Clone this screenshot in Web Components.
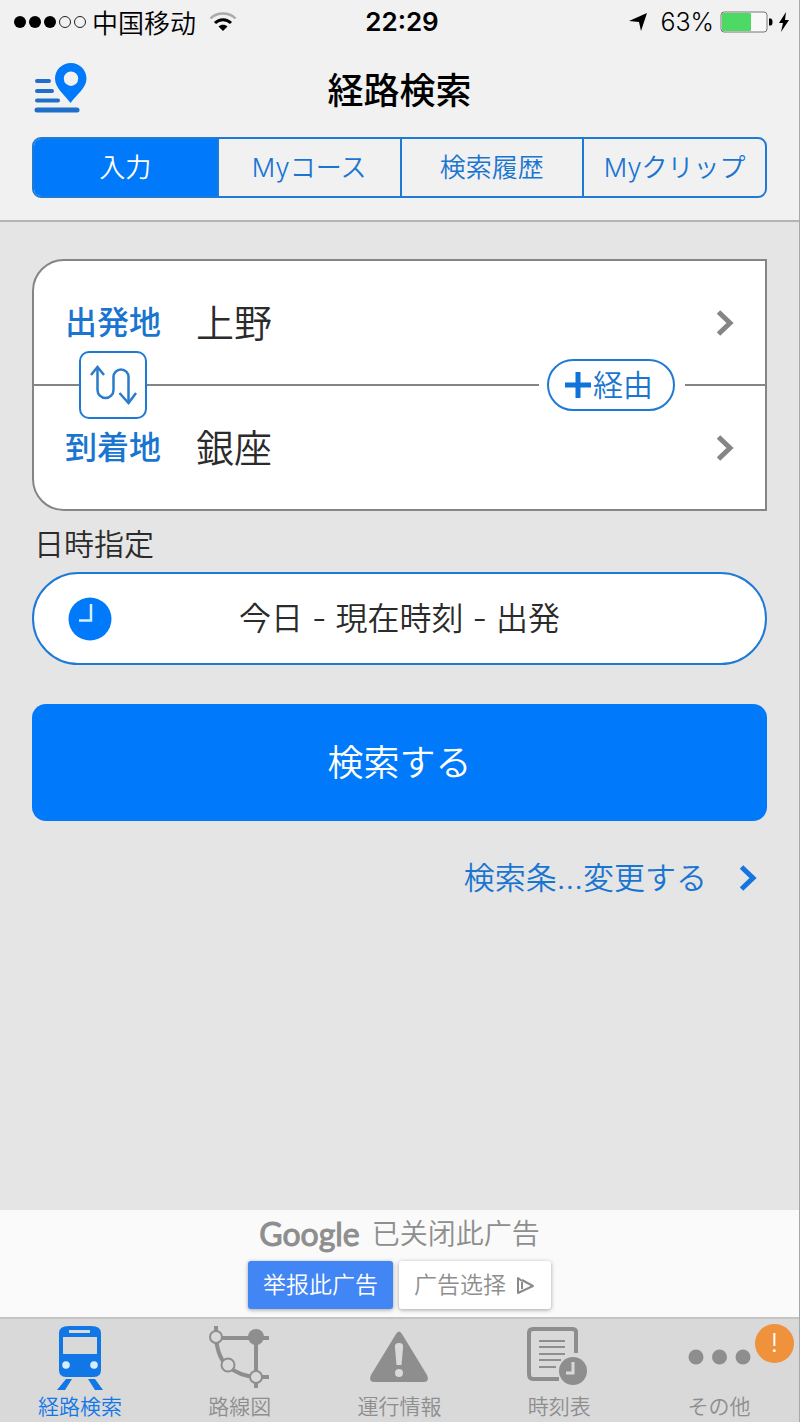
<!DOCTYPE html>
<html lang="ja">
<head>
<meta charset="utf-8">
<meta name="viewport" content="width=device-width, initial-scale=1">
<title>経路検索</title>
<style>
    body {
        --blue: #007afa;
        --line-blue: #1f7ad6;
        --text-blue: #1a75d1;
        --grey: #8e8e8e;
        margin: 0;
        background: #e5e5e5;
        color: #2b2b2b;
        font-family: Inter, "Noto Sans CJK JP", sans-serif;
        font-weight: 350;
    }
</style>
</head>
<body>
<transit-app>
    <status-bar slot="top" carrier="中国移动" time="22:29" battery="63"></status-bar>
    <page-header slot="top" heading="経路検索">
        <segment-item selected>入力</segment-item>
        <segment-item>Myコース</segment-item>
        <segment-item>検索履歴</segment-item>
        <segment-item>Myクリップ</segment-item>
    </page-header>

    <route-card>
        <route-row slot="from" label="出発地">上野</route-row>
        <route-row slot="to" label="到着地">銀座</route-row>
        <span slot="via">経由</span>
    </route-card>
    <date-field label="日時指定">今日 - 現在時刻 - 出発</date-field>
    <search-button>検索する</search-button>
    <option-link href="#options">検索条…変更する</option-link>

    <ad-notice slot="bottom" lang="zh-CN"></ad-notice>
    <tab-bar slot="bottom">
        <tab-item icon="train" href="#route" active>経路検索</tab-item>
        <tab-item icon="map" href="#map">路線図</tab-item>
        <tab-item icon="warning" href="#status">運行情報</tab-item>
        <tab-item icon="timetable" href="#timetable">時刻表</tab-item>
        <tab-item icon="more" href="#more" badge="!">その他</tab-item>
    </tab-bar>
</transit-app>

<script>
/**
 * Shared base: renders the markup and the styles of an element once.
 *
 * @extends HTMLElement
 */
class BaseElement extends HTMLElement {
    constructor() {
        super();
        this.attachShadow({ mode: 'open' });
    }

    connectedCallback() {
        this.shadowRoot.innerHTML = `
            <style>
                * { box-sizing: border-box; }
                button { font: inherit; color: inherit; border: 0; margin: 0; padding: 0; background: none; cursor: pointer; }
                a { color: inherit; text-decoration: none; }
                svg { display: block; flex: none; }
                ${this.styles}
            </style>
            ${this.markup}`;
    }
}

/** Page frame: bars at the top and bottom, the form between them. */
class TransitApp extends BaseElement {
    get markup() {
        return `
            <header><slot name="top"></slot></header>
            <main><slot></slot></main>
            <footer><slot name="bottom"></slot></footer>
        `;
    }

    get styles() {
        return `
            :host {
                display: flex;
                flex-direction: column;
                box-sizing: border-box;
                min-height: 100vh;
                border-right: 1px solid #a8a8a8;
            }
            header { background: #f1f1f1; border-bottom: 2px solid #b4b4b4; }
            main { flex: 1; padding: 37px 32px 32px; }
        `;
    }
}

class StatusBar extends BaseElement {
    get markup() {
        const level = Number(this.getAttribute('battery'));
        return `
            <div class="side">
                <svg width="72" height="14" viewBox="0 0 72 14">
                    <g><circle cx="6" cy="7" r="6"/><circle cx="21" cy="7" r="6"/><circle cx="36" cy="7" r="6"/></g>
                    <g fill="none" stroke="#222"><circle cx="51" cy="7" r="5.5"/><circle cx="66" cy="7" r="5.5"/></g>
                </svg>
                <span class="carrier" lang="zh-CN">${this.getAttribute('carrier')}</span>
                <svg class="wifi" width="28" height="20" viewBox="0 0 28 20" fill="none" stroke-width="3">
                    <path d="M1.5 6.5C8 -.2 20 -.2 26.500 6.500" stroke="#aaa" stroke-width="2.500"/>
                    <path d="M6 11C10.500 6.500 17.500 6.500 22 11" stroke="#000"/>
                    <path d="M9.500 14.500C12 12 16 12 18.500 14.500L14 19Z" fill="#000"/>
                </svg>
            </div>
            <span class="time">${this.getAttribute('time')}</span>
            <div class="side end">
                <svg width="20" height="20" viewBox="0 0 20 20"><path d="M19 1L13 19L11 10L1 9Z"/></svg>
                <span class="percent">${level}%</span>
                <div class="power">
                    <svg width="54" height="22" viewBox="0 0 54 22">
                        <rect x="1" y="1" width="46" height="20" rx="3" fill="#f8f8f8" stroke="#777"/>
                        <rect x="2" y="2" width="${level * 46 / 100}" height="18" rx="1" fill="#4cd964"/>
                        <path d="M49 7.500h1.500q2 0 2 3.500t-2 3.500H49z"/>
                    </svg>
                    <svg width="12" height="20" viewBox="0 0 12 20"><path d="M8 0L1 11H5L3 20L11 8H7Z"/></svg>
                </div>
            </div>
        `;
    }

    get styles() {
        return `
            :host {
                display: grid;
                grid-template-columns: 1fr auto 1fr;
                align-items: center;
                height: 44px;
                padding: 0 9px 0 14px;
                color: #000;
                font-size: 26px;
                line-height: 32px;
            }
            .side { display: flex; align-items: center; gap: 6px; }
            .end { justify-content: flex-end; gap: 12px; }
            .carrier { font-family: "Noto Sans CJK SC", sans-serif; }
            .wifi { margin-left: 7px; }
            .time { font-weight: 600; }
            .percent { font-size: 25px; }
            .power { display: flex; align-items: center; gap: 4px; margin-left: -6px; }
        `;
    }
}

class PageHeader extends BaseElement {
    get markup() {
        return `
            <div class="bar">
                <button type="button" aria-label="地点メモ">
                    <svg width="54" height="56" viewBox="0 0 54 56">
                        <g stroke="#1f6fc8" stroke-linecap="round" stroke-width="4">
                            <path d="M3 18H15M3 28H18M3 37.500H24"/>
                            <path d="M3 47H43" stroke-width="5"/>
                        </g>
                        <path d="M37 0C28 0 21 7 21 15.500C21 25 30 31 36.500 40C43 31 52.500 25 52.500 15.500C52.500 7 45.500 0 37 0ZM37 8.500a7.200 7.200 0 1 1 0 14.400a7.200 7.200 0 1 1 0-14.400Z" fill="#007afa" fill-rule="evenodd"/>
                    </svg>
                </button>
                <h1>${this.getAttribute('heading')}</h1>
            </div>
            <nav><slot></slot></nav>
        `;
    }

    get styles() {
        return `
            :host { display: block; padding: 0 32px 22px; }
            .bar { display: grid; grid-template-columns: 1fr auto 1fr; align-items: center; height: 93px; color: #000; }
            .bar button { justify-self: start; margin-left: 2px; }
            h1 { margin: 0; font-size: 36px; line-height: 48px; font-weight: 500; }
            nav {
                display: grid;
                grid-template-columns: repeat(4, 1fr);
                border: 2px solid var(--line-blue);
                border-radius: 9px;
                overflow: hidden;
            }
        `;
    }
}

class SegmentItem extends BaseElement {
    get markup() {
        return `<button type="button" aria-pressed="${this.hasAttribute('selected')}"><slot></slot></button>`;
    }

    get styles() {
        return `
            :host { display: block; border-left: 2px solid var(--line-blue); color: var(--text-blue); }
            :host(:first-child) { border-left: 0; }
            :host([selected]) { background: var(--blue); color: #fff; }
            button { width: 100%; height: 57px; font-size: 26px; line-height: 32px; white-space: nowrap; }
        `;
    }
}

class ChevronIcon extends BaseElement {
    get markup() {
        return `
            <svg width="18" height="28" viewBox="0 0 18 28" fill="none" stroke="currentColor" stroke-width="5">
                <path d="M2.500 3L14 14L2.500 25"/>
            </svg>
        `;
    }

    get styles() {
        return `:host { display: block; flex: none; }`;
    }
}

/** Start and goal rows, joined by a line that carries the swap and via buttons. */
class RouteCard extends BaseElement {
    get markup() {
        return `
            <slot name="from"></slot>
            <div class="joint">
                <i class="start"></i>
                <button type="button" class="swap" aria-label="入れ替え">
                    <svg width="48" height="42" viewBox="0 0 48 42" fill="none" stroke="#2a7ccb" stroke-width="2.500">
                        <path d="M8.500 4V26a8 8 0 0 0 16 0V13a7.500 7.500 0 0 1 15 0V39"/>
                        <path d="M2 11L8.500 3L15 11M30.500 29L39.500 39L47 29"/>
                    </svg>
                </button>
                <i class="middle"></i>
                <button type="button" class="via">
                    <svg width="26" height="26" viewBox="0 0 26 26" stroke="#0f73da" stroke-width="5"><path d="M13 0V26M0 13H26"/></svg>
                    <slot name="via"></slot>
                </button>
                <i class="end"></i>
            </div>
            <slot name="to"></slot>
        `;
    }

    get styles() {
        return `
            :host {
                display: block;
                background: #fff;
                border: 2px solid #858585;
                border-radius: 32px 0 0 32px;
            }
            .joint { display: flex; align-items: center; height: 2px; }
            i { height: 2px; background: #858585; }
            .start { width: 45px; }
            .middle { flex: 1; margin-right: 8px; }
            .end { width: 80px; margin-left: 10px; }
            button { position: relative; flex: none; background: #fff; border: 2px solid var(--line-blue); color: var(--text-blue); }
            .swap { display: grid; place-items: center; width: 68px; height: 68px; border-radius: 10px; }
            .via {
                display: flex;
                align-items: center;
                justify-content: center;
                gap: 2px;
                width: 128px;
                height: 52px;
                padding-right: 4px;
                border-radius: 26px;
                font-size: 30px;
                line-height: 36px;
            }
        `;
    }
}

class RouteRow extends BaseElement {
    get markup() {
        return `
            <button type="button">
                <span class="label">${this.getAttribute('label')}</span>
                <span class="value"><slot></slot></span>
                <chevron-icon></chevron-icon>
            </button>
        `;
    }

    get styles() {
        return `
            :host { display: block; }
            button { display: flex; align-items: center; width: 100%; height: 123px; padding: 0 31px; text-align: left; }
            .label { width: 131px; color: var(--text-blue); font-size: 32px; line-height: 48px; font-weight: 500; }
            .value { flex: 1; font-size: 38px; line-height: 48px; }
            chevron-icon { color: #858585; }
        `;
    }
}

class DateField extends BaseElement {
    get markup() {
        return `
            <label for="when">${this.getAttribute('label')}</label>
            <button type="button" id="when">
                <svg width="44" height="44" viewBox="0 0 44 44">
                    <circle cx="22" cy="22" r="21.500" fill="#007afa"/>
                    <path d="M23 7V23.500H11" fill="none" stroke="#d8f1ff" stroke-width="2.500"/>
                </svg>
                <span><slot></slot></span>
            </button>
        `;
    }

    get styles() {
        return `
            :host { display: block; margin-top: 15px; }
            label { display: block; margin: 0 2px 10px; font-size: 30px; line-height: 36px; }
            button {
                display: grid;
                grid-template-columns: 44px 1fr 44px;
                align-items: center;
                width: 100%;
                height: 93px;
                padding: 0 34px;
                background: #fff;
                border: 2px solid var(--line-blue);
                border-radius: 47px;
                font-size: 32px;
                line-height: 48px;
            }
        `;
    }
}

class SearchButton extends BaseElement {
    get markup() {
        return `<button type="button"><slot></slot></button>`;
    }

    get styles() {
        return `
            :host { display: block; margin-top: 39px; }
            button {
                width: 100%;
                height: 117px;
                background: var(--blue);
                border-radius: 14px;
                color: #fff;
                font-size: 36px;
                line-height: 48px;
            }
        `;
    }
}

class OptionLink extends BaseElement {
    get markup() {
        return `<a href="${this.getAttribute('href')}"><slot></slot><chevron-icon></chevron-icon></a>`;
    }

    get styles() {
        return `
            :host { display: flex; justify-content: flex-end; margin-top: 33px; padding-right: 10px; }
            a { display: flex; align-items: center; gap: 32px; color: var(--text-blue); font-size: 31px; line-height: 48px; }
            chevron-icon { color: #1474e0; }
        `;
    }
}

class AdNotice extends BaseElement {
    get markup() {
        return `
            <p><b>Google</b><span>已关闭此广告</span></p>
            <div class="actions">
                <button type="button" class="report">举报此广告</button>
                <button type="button" class="choices">
                    广告选择
                    <svg width="20" height="20" viewBox="0 0 20 20" fill="none" stroke="#8a8a8a" stroke-width="2" stroke-linejoin="round">
                        <path d="M6 14V7M6 6L2 3V18L17 11L6 5"/>
                    </svg>
                </button>
            </div>
        `;
    }

    get styles() {
        return `
            :host {
                display: block;
                padding: 3px 0 8px;
                background: #fafafa;
                color: #8e8e8e;
                font-family: Inter, "Noto Sans CJK SC", sans-serif;
            }
            p { display: flex; align-items: center; justify-content: center; gap: 12px; margin: 0 0 6px; font-size: 28px; line-height: 42px; }
            b { font-family: Lato, sans-serif; font-size: 32px; font-weight: 400; -webkit-text-stroke: 1px; }
            .actions { display: flex; justify-content: center; gap: 6px; }
            button {
                display: flex;
                align-items: center;
                justify-content: center;
                gap: 10px;
                height: 48px;
                padding: 0 15px;
                border-radius: 3px;
                box-shadow: 0 1px 4px rgba(0, 0, 0, .35);
                font-size: 23px;
                line-height: 32px;
            }
            .report { background: #4285f4; color: #fff; }
            .choices { background: #fff; }
        `;
    }
}

class TabBar extends BaseElement {
    get markup() {
        return `<nav><slot></slot></nav>`;
    }

    get styles() {
        return `
            :host { display: block; background: #d9d9d9; border-top: 2px solid #c4c4c4; }
            nav { display: grid; grid-template-columns: repeat(5, 1fr); }
        `;
    }
}

const tabIcons = {
    train: `
        <path fill-rule="evenodd" d="M17 0H39Q49 0 49 7V44Q49 51 42 51H14Q7 51 7 44V7Q7 0 17 0ZM17 4V7H38V4ZM11 11V28H45V11Z"/>
        <circle cx="14" cy="39" r="3.800" fill="#d6ecff"/><circle cx="42" cy="39" r="3.800" fill="#d6ecff"/>
        <path d="M14 53H20L13 64H5ZM36 53H43L51 64H43Z"/>
    `,
    map: `
        <g fill="none" stroke="currentColor" stroke-width="4">
            <path d="M4 0V12H57M44 12V62M4 12Q6 33 16 40Q27 50 44 51H57"/>
        </g>
        <circle cx="44" cy="11" r="8"/>
        <g fill="#d9d9d9" stroke="currentColor" stroke-width="2"><circle cx="4" cy="11" r="6"/><circle cx="16" cy="39" r="6.500"/><circle cx="44" cy="51" r="6"/></g>
    `,
    warning: `
        <path d="M25 8Q28 3 31 8L56 49Q59 56 53 56H3Q-3 56 0 49Z"/>
        <path d="M28 17Q33 17 32 22L30.500 39H25.500L24 22Q23 17 28 17Z" fill="#d9d9d9"/><circle cx="28" cy="47" r="4" fill="#d9d9d9"/>
    `,
    timetable: `
        <path d="M45 27V6Q45 3 41 3H2Q-2 3 -2 7V48Q-2 53 2 53H28" fill="none" stroke="currentColor" stroke-width="4"/>
        <path d="M8 15H34M8 21H34M8 28H34M8 34H30M8 41H25" stroke="currentColor" stroke-width="2"/>
        <circle cx="42" cy="45" r="14"/>
        <path d="M42 36V47H35" fill="none" stroke="#d9d9d9" stroke-width="3"/>
    `,
    more: `<circle cx="5" cy="31" r="7.500"/><circle cx="28.500" cy="31" r="7.500"/><circle cx="52" cy="31" r="7.500"/>`
};

class TabItem extends BaseElement {
    get markup() {
        const badge = this.getAttribute('badge');
        return `
            <a href="${this.getAttribute('href')}">
                <svg width="56" height="64" viewBox="0 0 56 64" fill="currentColor">${tabIcons[this.getAttribute('icon')]}</svg>
                <slot></slot>
                ${badge ? `<span class="badge">${badge}</span>` : ''}
            </a>
        `;
    }

    get styles() {
        return `
            :host { display: block; color: var(--grey); }
            :host([active]) { color: #1277e6; }
            svg { overflow: visible; }
            a {
                position: relative;
                display: flex;
                flex-direction: column;
                align-items: center;
                gap: 2px;
                padding-top: 7px;
                font-size: 21px;
                line-height: 30px;
                white-space: nowrap;
            }
            .badge {
                position: absolute;
                top: 5px;
                right: 5px;
                width: 39px;
                height: 39px;
                border-radius: 50%;
                background: #f0913c;
                color: #fff;
                font-size: 26px;
                line-height: 38px;
                text-align: center;
            }
        `;
    }
}

customElements.define('transit-app', TransitApp);
customElements.define('status-bar', StatusBar);
customElements.define('page-header', PageHeader);
customElements.define('segment-item', SegmentItem);
customElements.define('chevron-icon', ChevronIcon);
customElements.define('route-card', RouteCard);
customElements.define('route-row', RouteRow);
customElements.define('date-field', DateField);
customElements.define('search-button', SearchButton);
customElements.define('option-link', OptionLink);
customElements.define('ad-notice', AdNotice);
customElements.define('tab-bar', TabBar);
customElements.define('tab-item', TabItem);
</script>
</body>
</html>
